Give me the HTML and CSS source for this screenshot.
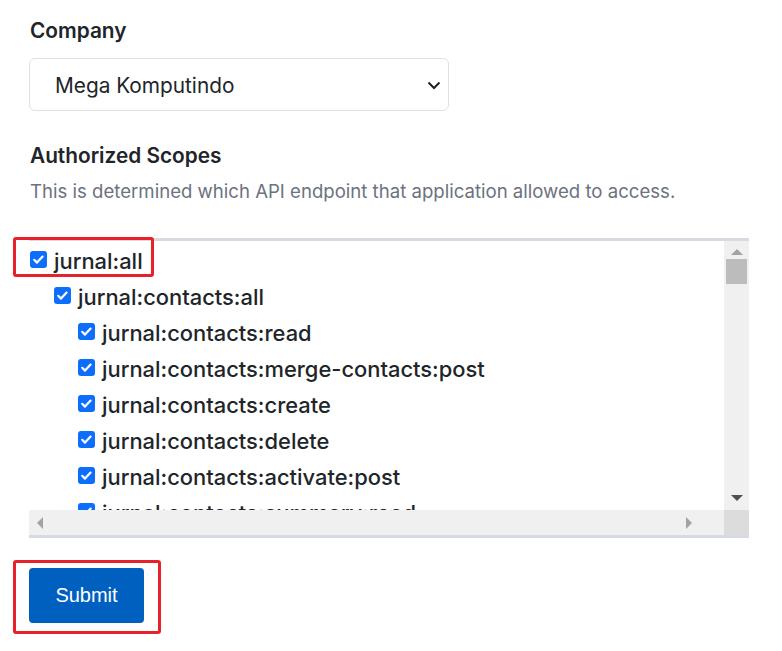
FILE: index.html
```html
<!DOCTYPE html>
<html lang="en">
<head>
<meta charset="utf-8">
<title>Authorize</title>
<link rel="stylesheet" href="styles.css">
</head>
<body>
<main class="page">
  <section class="field">
    <label class="label" for="company">Company</label>
    <div class="select-wrap">
      <select id="company" class="select">
        <option>Mega Komputindo</option>
      </select>
      <svg class="chev" width="14" height="9" viewBox="0 0 14 9"><path d="M1.5 1.5 7 7l5.5-5.5" fill="none" stroke="#222" stroke-width="2"/></svg>
    </div>
  </section>

  <section class="field scopes-field">
    <div class="label">Authorized Scopes</div>
    <p class="help">This is determined which API endpoint that application allowed to access.</p>
    <div class="scope-box">
      <div class="scope-view">
        <ul class="tree">
          <li class="item l0"><span class="cb"><svg viewBox="0 0 17 17"><path d="M4.2 8.8l2.8 2.8 5.6-6" fill="none" stroke="#fff" stroke-width="2.2" stroke-linecap="round" stroke-linejoin="round"/></svg></span>jurnal:all</li>
          <li class="item l1"><span class="cb"><svg viewBox="0 0 17 17"><path d="M4.2 8.8l2.8 2.8 5.6-6" fill="none" stroke="#fff" stroke-width="2.2" stroke-linecap="round" stroke-linejoin="round"/></svg></span>jurnal:contacts:all</li>
          <li class="item l2"><span class="cb"><svg viewBox="0 0 17 17"><path d="M4.2 8.8l2.8 2.8 5.6-6" fill="none" stroke="#fff" stroke-width="2.2" stroke-linecap="round" stroke-linejoin="round"/></svg></span>jurnal:contacts:read</li>
          <li class="item l2"><span class="cb"><svg viewBox="0 0 17 17"><path d="M4.2 8.8l2.8 2.8 5.6-6" fill="none" stroke="#fff" stroke-width="2.2" stroke-linecap="round" stroke-linejoin="round"/></svg></span>jurnal:contacts:merge-contacts:post</li>
          <li class="item l2"><span class="cb"><svg viewBox="0 0 17 17"><path d="M4.2 8.8l2.8 2.8 5.6-6" fill="none" stroke="#fff" stroke-width="2.2" stroke-linecap="round" stroke-linejoin="round"/></svg></span>jurnal:contacts:create</li>
          <li class="item l2"><span class="cb"><svg viewBox="0 0 17 17"><path d="M4.2 8.8l2.8 2.8 5.6-6" fill="none" stroke="#fff" stroke-width="2.2" stroke-linecap="round" stroke-linejoin="round"/></svg></span>jurnal:contacts:delete</li>
          <li class="item l2"><span class="cb"><svg viewBox="0 0 17 17"><path d="M4.2 8.8l2.8 2.8 5.6-6" fill="none" stroke="#fff" stroke-width="2.2" stroke-linecap="round" stroke-linejoin="round"/></svg></span>jurnal:contacts:activate:post</li>
          <li class="item l2"><span class="cb"><svg viewBox="0 0 17 17"><path d="M4.2 8.8l2.8 2.8 5.6-6" fill="none" stroke="#fff" stroke-width="2.2" stroke-linecap="round" stroke-linejoin="round"/></svg></span>jurnal:contacts:summary:read</li>
        </ul>
      </div>
      <div class="vbar">
        <span class="arr up"></span>
        <span class="thumb"></span>
        <span class="track"></span>
        <span class="arr down"></span>
      </div>
      <div class="hbar">
        <span class="arr left"></span>
        <span class="track"></span>
        <span class="arr right"></span>
      </div>
      <div class="corner"></div>
      <div class="mark mark-scope"></div>
    </div>
  </section>

  <div class="actions">
    <button class="btn" type="submit">Submit</button>
    <div class="mark mark-btn"></div>
  </div>
</main>
</body>
</html>
```

FILE: styles.css
```css
* { box-sizing: border-box; }
html, body { margin: 0; background: #fff; }
body {
  font-family: Inter, "Noto Sans", sans-serif;
  color: #212529;
}
.page {
  padding: 17px 33px 0 29px;
  width: 782px;
  min-height: 651px;
}
.field { position: relative; }
.label {
  display: block;
  font-size: 20.8px;
  font-weight: 600;
  line-height: 28px;
  padding-left: 1px;
  color: #212529;
}
.select-wrap {
  position: relative;
  width: 420px;
  margin-top: 13px;
}
.select {
  appearance: none;
  -webkit-appearance: none;
  display: block;
  width: 100%;
  height: 53px;
  border: 1px solid #dee2e6;
  border-radius: 6px;
  background: #fff;
  font-family: Inter, "Noto Sans", sans-serif;
  font-size: 20.8px;
  color: #212529;
  padding: 2px 40px 0 25px;
  outline: none;
}
.chev {
  position: absolute;
  right: 8px;
  top: 23px;
  pointer-events: none;
}
.scopes-field { margin-top: 31px; }
.help {
  margin: 8px 0 0 1px;
  font-size: 18.6px;
  line-height: 26px;
  color: #6c727f;
}
.scope-box {
  position: relative;
  margin-top: 34px;
  width: 720px;
  height: 300px;
  border-top: 3px solid #d6dbe2;
  border-bottom: 3px solid #d6dbe2;
  display: grid;
  grid-template-columns: 1fr 25px;
  grid-template-rows: 1fr 25px;
}
.scope-view {
  overflow: hidden;
  grid-column: 1;
  grid-row: 1;
}
.tree {
  list-style: none;
  margin: 0;
  padding: 2px 0 0 1px;
}
.item {
  display: flex;
  align-items: center;
  height: 36px;
  font-size: 21.9px;
  font-weight: 500;
  color: #212529;
  white-space: nowrap;
}
.l1 { padding-left: 24px; }
.l2 { padding-left: 48px; }
.cb {
  flex: none;
  width: 17px;
  height: 17px;
  border-radius: 3px;
  background: #0d6efd;
  margin-right: 7px;
  margin-top: -3px;
  display: flex;
}
.cb svg { width: 17px; height: 17px; }
.vbar {
  grid-column: 2;
  grid-row: 1;
  background: #f0f0f0;
  display: flex;
  flex-direction: column;
  align-items: center;
}
.vbar .thumb {
  width: 21px;
  height: 25px;
  background: #bcbcbc;
  margin-top: 4px;
}
.vbar .track { flex: 1; }
.arr { width: 0; height: 0; border-style: solid; }
.arr.up {
  margin-top: 8px;
  border-width: 0 6px 6px 6px;
  border-color: transparent transparent #a3a3a3 transparent;
}
.arr.down {
  margin-bottom: 9px;
  border-width: 6px 6px 0 6px;
  border-color: #505050 transparent transparent transparent;
}
.hbar {
  grid-column: 1;
  grid-row: 2;
  background: #f0f0f0;
  display: flex;
  align-items: center;
  padding: 0 8px;
}
.hbar .track { flex: 1; }
.arr.left {
  border-width: 6px 6px 6px 0;
  border-color: transparent #a3a3a3 transparent transparent;
}
.arr.right {
  margin-right: 24px;
  border-width: 6px 0 6px 6px;
  border-color: transparent transparent transparent #a3a3a3;
}
.corner {
  grid-column: 2;
  grid-row: 2;
  background: #dcdcdc;
}
.mark {
  position: absolute;
  z-index: 2;
  border: 3px solid #e8202a;
  border-radius: 3px;
  pointer-events: none;
}
.mark-scope {
  left: -16px;
  top: -4px;
  width: 141px;
  height: 40px;
}
.actions {
  position: relative;
  margin-top: 30px;
}
.btn {
  display: block;
  width: 115px;
  height: 55px;
  border: 0;
  border-radius: 4px;
  background: #0060c0;
  color: #fff;
  font-family: "Liberation Sans", Arial, sans-serif;
  font-size: 20px;
  padding: 0;
}
.mark-btn {
  left: -16px;
  top: -8px;
  width: 148px;
  height: 74px;
}
```
